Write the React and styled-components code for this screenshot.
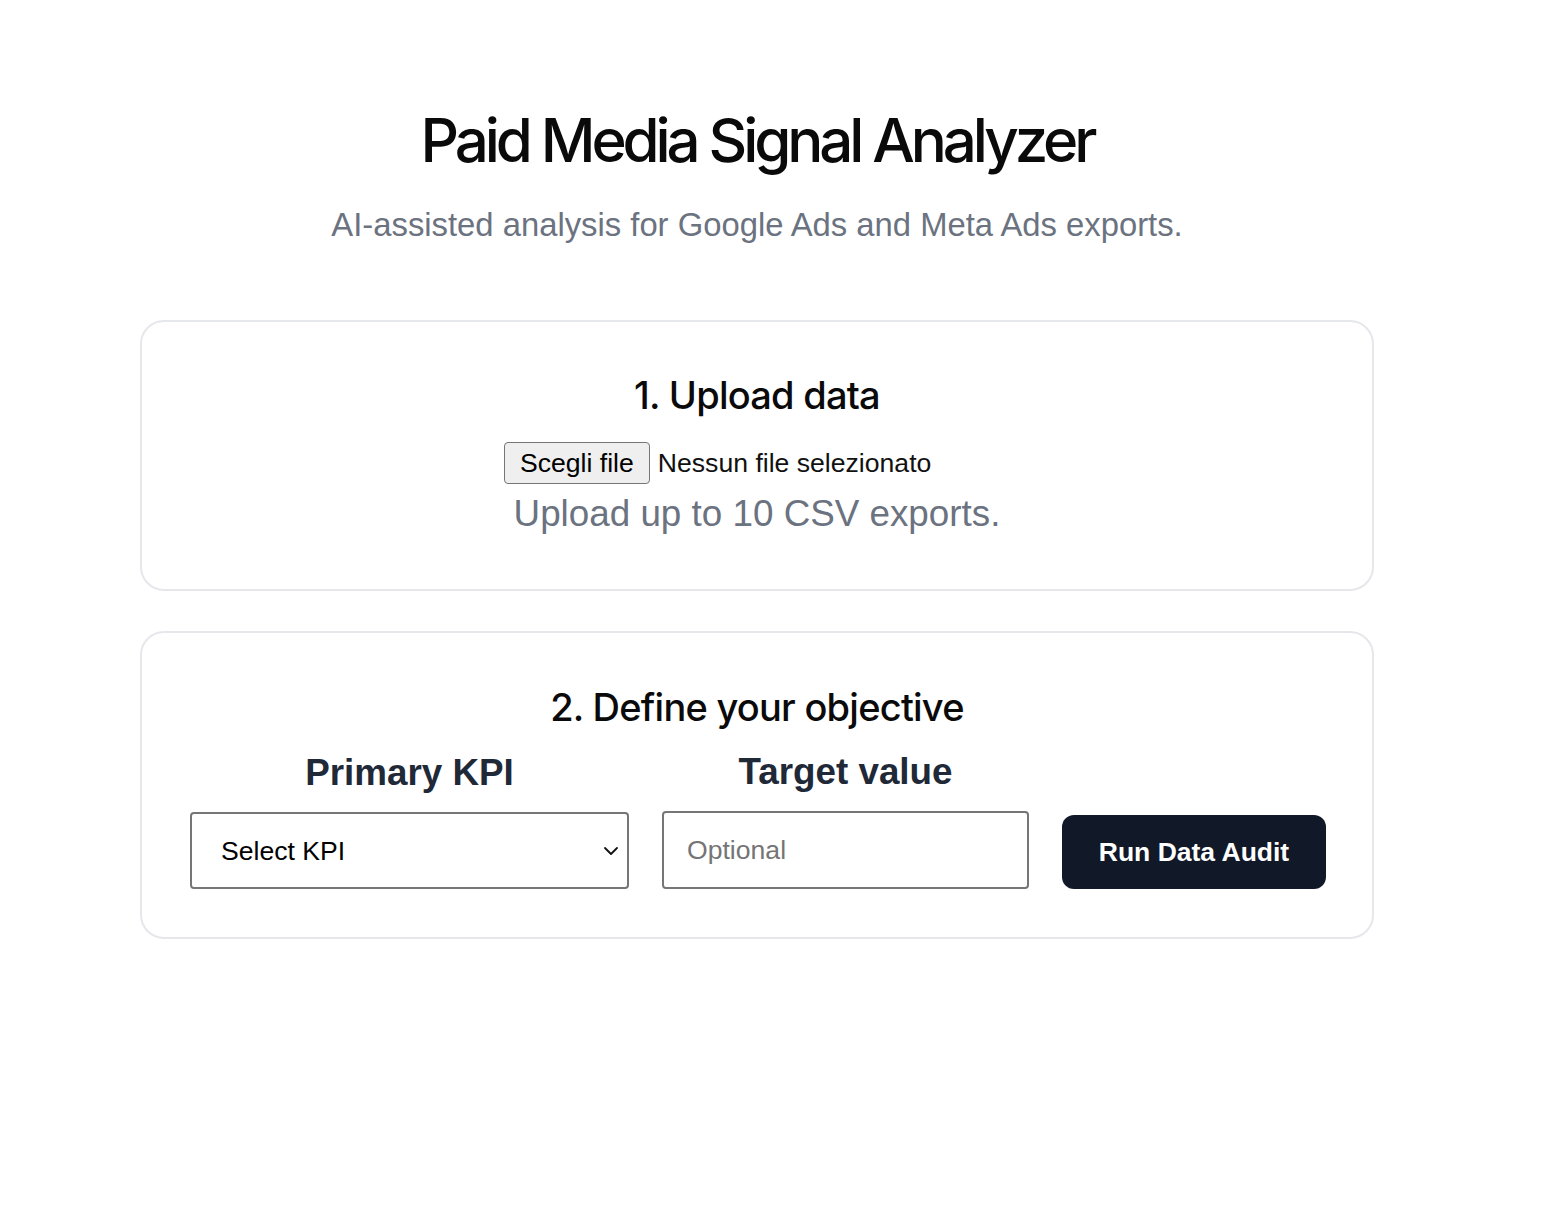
import React, { useState } from 'react';
import styled, { createGlobalStyle } from 'styled-components';

const GlobalStyle = createGlobalStyle`
  * { box-sizing: border-box; }
  body {
    margin: 0;
    background: #fff;
    font-family: "Liberation Sans", Arial, sans-serif;
    color: #111827;
  }
`;

const Page = styled.main`
  width: 1234px;
  margin-left: 140px;
  padding-top: 104px;
  display: flex;
  flex-direction: column;
  align-items: center;
`;

const Title = styled.h1`
  margin: 0;
  font-family: Inter, "Noto Sans", sans-serif;
  font-weight: 500;
  font-size: 60px;
  line-height: 72px;
  letter-spacing: -0.068em;
  color: #0a0a0a;
`;

const Subtitle = styled.p`
  margin: 28px 0 0;
  font-size: 32.8px;
  line-height: 42px;
  color: #6b7280;
`;

const Card = styled.section`
  width: 100%;
  margin-top: ${(p) => p.$top}px;
  border: 2px solid #e5e7eb;
  border-radius: 24px;
  padding: ${(p) => p.$pad};
  display: flex;
  flex-direction: column;
  align-items: center;
`;

const CardTitle = styled.h2`
  margin: 0;
  font-family: Inter, "Noto Sans", sans-serif;
  font-weight: 500;
  font-size: 38px;
  line-height: 48px;
  letter-spacing: -0.02em;
  color: #0a0a0a;
`;

const FileRow = styled.label`
  margin-top: 23px;
  width: 506px;
  display: flex;
  align-items: center;
  gap: 8px;
  font-size: 26.6px;
  color: #111;
  cursor: pointer;
  input { display: none; }
`;

const FileButton = styled.span`
  display: inline-flex;
  align-items: center;
  height: 42px;
  padding: 0 15px;
  background: #efefef;
  border: 1.5px solid #767676;
  border-radius: 4px;
  color: #000;
`;

const Helper = styled.p`
  margin: 7px 0 0;
  font-size: 36.8px;
  line-height: 46px;
  color: #6b7280;
`;

const FormGrid = styled.div`
  margin-top: 18px;
  width: 100%;
  display: grid;
  grid-template-columns: 439px 367px 264px;
  column-gap: 33px;
  align-items: end;
`;

const Field = styled.div`
  display: flex;
  flex-direction: column;
  align-items: center;
`;

const FieldLabel = styled.label`
  font-weight: 700;
  font-size: 36.8px;
  line-height: 46px;
  color: #1f2937;
  margin-bottom: 16px;
`;

const SelectWrap = styled.div`
  position: relative;
  width: 100%;
`;

const Select = styled.select`
  appearance: none;
  width: 100%;
  height: 77px;
  padding: 0 29px;
  border: 2px solid #767676;
  border-radius: 4px;
  background: #fff;
  font-family: "Liberation Sans", Arial, sans-serif;
  font-size: 26.6px;
  color: #000;
`;

const Chevron = styled.svg`
  position: absolute;
  right: 8px;
  top: 50%;
  transform: translateY(-50%);
  pointer-events: none;
`;

const Input = styled.input`
  width: 100%;
  height: 78px;
  padding: 0 23px;
  border: 2px solid #767676;
  border-radius: 4px;
  font-family: "Liberation Sans", Arial, sans-serif;
  font-size: 26.6px;
  color: #000;
  &::placeholder { color: #757575; }
`;

const RunButton = styled.button`
  height: 74px;
  border: none;
  border-radius: 12px;
  background: #111827;
  color: #fff;
  font-family: "Liberation Sans", Arial, sans-serif;
  font-weight: 700;
  font-size: 26.5px;
  cursor: pointer;
`;

export default function App() {
  const [files, setFiles] = useState([]);
  const [kpi, setKpi] = useState('');
  const [target, setTarget] = useState('');

  return (
    <>
      <GlobalStyle />
      <Page>
        <Title>Paid Media Signal Analyzer</Title>
        <Subtitle>AI-assisted analysis for Google Ads and Meta Ads exports.</Subtitle>

        <Card $top={74} $pad="49px 48px 52px">
          <CardTitle>1. Upload data</CardTitle>
          <FileRow>
            <input
              type="file"
              accept=".csv"
              multiple
              onChange={(e) => setFiles(Array.from(e.target.files).slice(0, 10))}
            />
            <FileButton>Scegli file</FileButton>
            <span>
              {files.length === 0
                ? 'Nessun file selezionato'
                : files.length === 1
                ? files[0].name
                : `${files.length} file`}
            </span>
          </FileRow>
          <Helper>Upload up to 10 CSV exports.</Helper>
        </Card>

        <Card $top={40} $pad="50px 48px 48px">
          <CardTitle>2. Define your objective</CardTitle>
          <FormGrid>
            <Field>
              <FieldLabel htmlFor="kpi">Primary KPI</FieldLabel>
              <SelectWrap>
                <Select id="kpi" value={kpi} onChange={(e) => setKpi(e.target.value)}>
                  <option value="">Select KPI</option>
                  <option value="cpa">CPA</option>
                  <option value="roas">ROAS</option>
                  <option value="ctr">CTR</option>
                  <option value="cpc">CPC</option>
                </Select>
                <Chevron width="20" height="20" viewBox="0 0 20 20" fill="none">
                  <path d="M4 7l6 6 6-6" stroke="#111" strokeWidth="1.8" strokeLinecap="round" strokeLinejoin="round" />
                </Chevron>
              </SelectWrap>
            </Field>
            <Field>
              <FieldLabel htmlFor="target">Target value</FieldLabel>
              <Input
                id="target"
                placeholder="Optional"
                value={target}
                onChange={(e) => setTarget(e.target.value)}
              />
            </Field>
            <RunButton type="button">Run Data Audit</RunButton>
          </FormGrid>
        </Card>
      </Page>
    </>
  );
}
